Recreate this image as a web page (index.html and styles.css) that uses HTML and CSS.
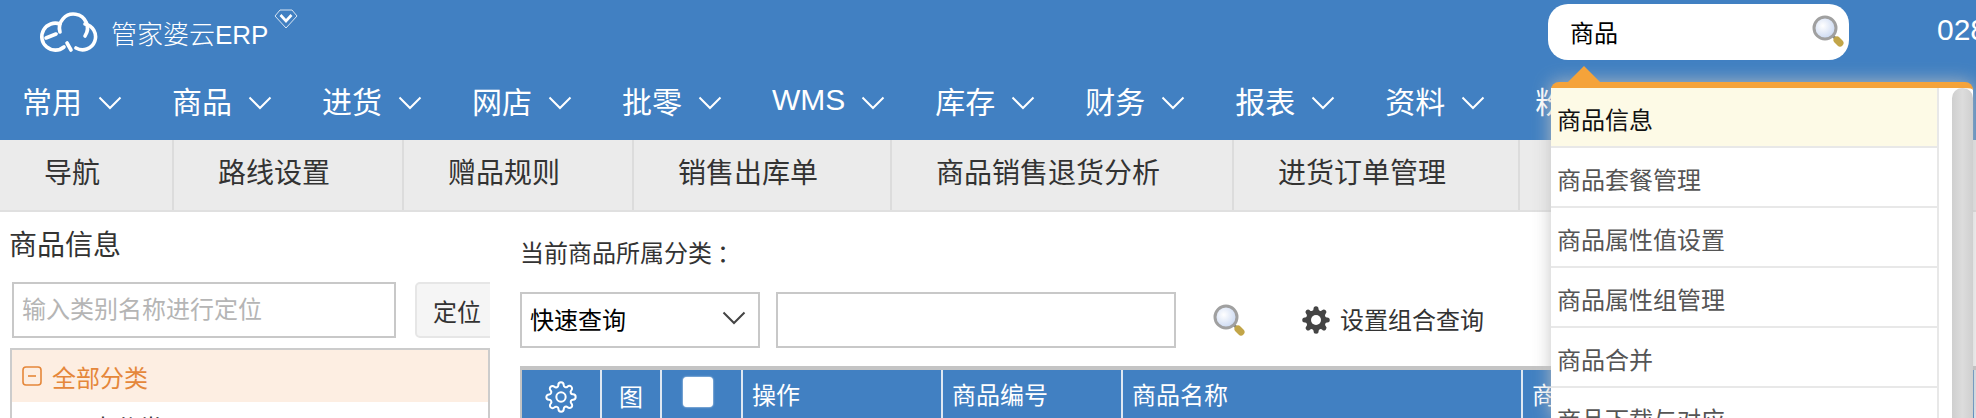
FILE: index.html
```html
<!DOCTYPE html>
<html lang="zh-CN">
<head>
  <meta charset="UTF-8">
  <title>管家婆云ERP</title>
  <link rel="stylesheet" href="styles.css">
</head>
<body>
  <svg class="defs" width="0" height="0">
    <defs>
      <radialGradient id="lens" cx="40%" cy="40%" r="70%">
        <stop offset="0" stop-color="#ffffff"/>
        <stop offset="1" stop-color="#c3d3f0"/>
      </radialGradient>
      <symbol id="magnifier" viewBox="0 0 32 32">
        <line x1="21" y1="21" x2="24" y2="24" stroke="#8a8a7a" stroke-width="3"/>
        <line x1="25" y1="25" x2="28" y2="28" stroke="#c2a548" stroke-width="7" stroke-linecap="round"/>
        <circle cx="13" cy="13" r="11" fill="url(#lens)" stroke="#a0a0a0" stroke-width="3"/>
      </symbol>
      <symbol id="gear" viewBox="0 0 24 24">
        <path d="M19.4 15a1.65 1.65 0 0 0 .33 1.82l.06.06a2 2 0 0 1 0 2.83 2 2 0 0 1-2.83 0l-.06-.06a1.65 1.65 0 0 0-1.82-.33 1.65 1.65 0 0 0-1 1.51V21a2 2 0 0 1-2 2 2 2 0 0 1-2-2v-.09A1.65 1.65 0 0 0 9 19.4a1.65 1.65 0 0 0-1.82.33l-.06.06a2 2 0 0 1-2.83 0 2 2 0 0 1 0-2.83l.06-.06a1.65 1.65 0 0 0 .33-1.82 1.65 1.65 0 0 0-1.51-1H3a2 2 0 0 1-2-2 2 2 0 0 1 2-2h.09A1.65 1.65 0 0 0 4.6 9a1.65 1.65 0 0 0-.33-1.82l-.06-.06a2 2 0 0 1 0-2.83 2 2 0 0 1 2.83 0l.06.06a1.65 1.65 0 0 0 1.82.33H9a1.65 1.65 0 0 0 1-1.51V3a2 2 0 0 1 2-2 2 2 0 0 1 2 2v.09a1.65 1.65 0 0 0 1 1.51 1.65 1.65 0 0 0 1.82-.33l.06-.06a2 2 0 0 1 2.83 0 2 2 0 0 1 0 2.83l-.06.06a1.65 1.65 0 0 0-.33 1.82V9a1.65 1.65 0 0 0 1.51 1H21a2 2 0 0 1 2 2 2 2 0 0 1-2 2h-.09a1.65 1.65 0 0 0-1.51 1z"/>
      </symbol>
      <symbol id="chevron" viewBox="0 0 24 14">
        <polyline points="1.5,1.5 12,12 22.5,1.5" fill="none" stroke="currentColor" stroke-width="2"/>
      </symbol>
    </defs>
  </svg>

  <header class="header">
    <div class="topbar">
      <svg class="logo" viewBox="0 0 66 43" fill="none" stroke="#fff" stroke-width="3.6" stroke-linecap="round">
        <path d="M22 14A13.5 13.5 0 1 0 26 37"/>
        <path d="M8 28L18 24"/>
        <path d="M22 22A14 14 0 1 1 47 26"/>
        <path d="M47 14A13 13 0 1 1 38 38"/>
        <path d="M29 33L33 40"/>
      </svg>
      <span class="logo-text">管家婆云ERP</span>
      <svg class="diamond" viewBox="0 0 24 20" fill="none" stroke="#fff">
        <polygon points="6,1 18,1 23,7 12,19 1,7" stroke-width=".8"/>
        <polyline points="6.5,6 12,12 17.5,6" stroke-width="2.6"/>
      </svg>
      <div class="global-search">
        <span>商品</span>
        <svg class="magnifier"><use href="#magnifier"/></svg>
      </div>
      <span class="phone">028-</span>
    </div>
    <nav class="nav">
      <a class="nav-item">常用<svg class="chevron"><use href="#chevron"/></svg></a>
      <a class="nav-item">商品<svg class="chevron"><use href="#chevron"/></svg></a>
      <a class="nav-item">进货<svg class="chevron"><use href="#chevron"/></svg></a>
      <a class="nav-item">网店<svg class="chevron"><use href="#chevron"/></svg></a>
      <a class="nav-item">批零<svg class="chevron"><use href="#chevron"/></svg></a>
      <a class="nav-item">WMS<svg class="chevron"><use href="#chevron"/></svg></a>
      <a class="nav-item">库存<svg class="chevron"><use href="#chevron"/></svg></a>
      <a class="nav-item">财务<svg class="chevron"><use href="#chevron"/></svg></a>
      <a class="nav-item">报表<svg class="chevron"><use href="#chevron"/></svg></a>
      <a class="nav-item">资料<svg class="chevron"><use href="#chevron"/></svg></a>
      <a class="nav-item">粉丝<svg class="chevron"><use href="#chevron"/></svg></a>
    </nav>
  </header>

  <div class="tabs">
    <a class="tab">导航</a>
    <a class="tab">路线设置</a>
    <a class="tab">赠品规则</a>
    <a class="tab">销售出库单</a>
    <a class="tab">商品销售退货分析</a>
    <a class="tab">进货订单管理</a>
  </div>

  <div class="content">
    <aside class="sidebar">
      <h3 class="side-title">商品信息</h3>
      <div class="locate">
        <input class="field locate-input" type="text" placeholder="输入类别名称进行定位">
        <button class="locate-btn">定位</button>
      </div>
      <div class="tree">
        <div class="tree-root">
          <svg class="tree-toggle" viewBox="0 0 20 20" fill="none" stroke="#e5873a" stroke-width="1.6">
            <rect x="1" y="1" width="18" height="18" rx="3"/>
            <line x1="6" y1="10" x2="14" y2="10"/>
          </svg>
          全部分类
        </div>
        <div class="tree-child">未分类</div>
      </div>
    </aside>

    <main class="main">
      <div class="crumb">当前商品所属分类<span class="colon">：</span></div>
      <div class="toolbar">
        <div class="field select"><span class="select-text">快速查询</span><svg class="chevron select-arrow"><use href="#chevron"/></svg></div>
        <input class="field query-input" type="text">
        <svg class="magnifier query-icon"><use href="#magnifier"/></svg>
        <a class="combo">
          <svg class="combo-gear" viewBox="0 0 24 24"><use href="#gear"/><circle cx="12" cy="12" r="4" fill="#fff"/></svg>
          <span class="combo-text">设置组合查询</span>
        </a>
      </div>
      <table class="grid">
        <tr>
          <th class="col-gear">
            <svg class="th-gear" viewBox="0 0 24 24"><use href="#gear"/><circle cx="12" cy="12" r="3.5"/></svg>
          </th>
          <th class="col-pic">图</th>
          <th class="col-check"><span class="check"></span></th>
          <th class="col-op">操作</th>
          <th class="col-code">商品编号</th>
          <th class="col-name">商品名称</th>
          <th>商品规格</th>
        </tr>
      </table>
    </main>
  </div>

  <div class="suggest">
    <span class="suggest-arrow"></span>
    <div class="suggest-body">
      <ul class="suggest-list">
        <li class="active">商品信息</li>
        <li>商品套餐管理</li>
        <li>商品属性值设置</li>
        <li>商品属性组管理</li>
        <li>商品合并</li>
        <li>商品下载与对应</li>
      </ul>
      <div class="suggest-track"><div class="suggest-thumb"></div></div>
    </div>
  </div>
</body>
</html>
```

FILE: styles.css
```css
* {
  box-sizing: border-box;
}
html, body {
  height: 418px;
  overflow: hidden;
}
body {
  position: relative;
  margin: 0;
  width: 1976px;
  background: #ffffff;
  color: #333333;
  font-family: "Liberation Sans", "Noto Sans CJK SC", sans-serif;
  font-size: 24px;
}
.defs {
  position: absolute;
}

/* header */
.header {
  height: 140px;
  background: #4180c2;
  color: #ffffff;
}
.topbar {
  display: flex;
  height: 60px;
  padding-left: 38px;
}
.logo {
  flex-shrink: 0;
  width: 66px;
  height: 43px;
  margin-top: 10px;
}
.logo-text {
  flex-shrink: 0;
  width: 163px;
  margin: 20px 0 0 7px;
  font-size: 26px;
  line-height: 30px;
  font-weight: 300;
}
.diamond {
  flex-shrink: 0;
  width: 24px;
  height: 20px;
  margin-top: 9px;
}
.global-search {
  flex-shrink: 0;
  display: flex;
  align-items: center;
  justify-content: space-between;
  width: 301px;
  height: 56px;
  margin: 4px 0 0 1250px;
  padding: 0 5px 2px 22px;
  background: #ffffff;
  border-radius: 20px;
  color: #000000;
}
.magnifier {
  width: 32px;
  height: 32px;
}
.phone {
  flex-shrink: 0;
  margin: 13px 0 0 88px;
  font-size: 30px;
  line-height: 34px;
}
.nav {
  display: flex;
  gap: 50px;
  height: 80px;
  padding: 0 0 0 22px;
  align-items: center;
  font-size: 30px;
  white-space: nowrap;
}
.nav-item {
  display: flex;
  align-items: center;
  gap: 16px;
}
.chevron {
  width: 24px;
  height: 14px;
  margin-top: 6px;
}

/* tabs */
.tabs {
  display: flex;
  height: 72px;
  background: #ebebeb;
  border-bottom: 2px solid #e0e0e0;
  font-size: 28px;
  line-height: 68px;
}
.tab {
  padding: 0 72px 0 44px;
  border-right: 2px solid #dcdcdc;
  white-space: nowrap;
}

/* left tree */
.content {
  display: flex;
}
.sidebar {
  flex-shrink: 0;
  width: 480px;
  margin-left: 10px;
  overflow: hidden;
}
.side-title {
  margin: 20px 0 0 -1px;
  font-size: 28px;
  font-weight: normal;
  line-height: 28px;
}
.field {
  height: 56px;
  border: 2px solid #c8c8c8;
  background: #ffffff;
  font: inherit;
  color: #000000;
}
.locate {
  display: flex;
  gap: 19px;
  margin: 22px 0 0 2px;
}
.locate-input {
  flex-shrink: 0;
  width: 384px;
  padding: 0 8px;
}
.locate-input::placeholder {
  color: #b5b5b5;
}
.locate-btn {
  flex-shrink: 0;
  width: 90px;
  height: 56px;
  padding: 0 0 0 16px;
  background: #f5f5f5;
  border: 2px solid #e6e6e6;
  border-radius: 5px;
  font: inherit;
  color: #333333;
  text-align: left;
}
.tree {
  height: 90px;
  margin-top: 10px;
  border: 2px solid #cccccc;
}
.tree-root {
  display: flex;
  align-items: center;
  gap: 10px;
  height: 52px;
  padding-left: 10px;
  background: #fdeee2;
  color: #e5873a;
}
.tree-toggle {
  width: 20px;
  height: 20px;
}
.tree-child {
  padding: 11px 0 0 79px;
  line-height: 32px;
}

/* right side */
.main {
  flex-grow: 1;
  min-width: 0;
  margin-left: 30px;
}
.crumb {
  margin-top: 26px;
  line-height: 28px;
  font-size: 24px;
}
.colon {
  margin-left: 5px;
  font-family: "Noto Sans CJK TC", sans-serif;
}
.toolbar {
  display: flex;
  align-items: center;
  margin-top: 24px;
}
.select {
  display: flex;
  align-items: center;
  justify-content: space-between;
  flex-shrink: 0;
  width: 240px;
  padding: 0 12px 0 8px;
}
.select-text {
  margin-bottom: 4px;
}
.select-arrow {
  color: #444444;
  margin: 0 0 4px;
}
.query-input {
  flex-shrink: 0;
  width: 400px;
  margin-left: 16px;
}
.query-icon {
  margin-left: 37px;
}
.combo {
  display: flex;
  align-items: center;
  gap: 9px;
  margin-left: 56px;
}
.combo-gear {
  width: 30px;
  height: 30px;
  fill: #444444;
}
.combo-text {
  margin-bottom: 4px;
}
.grid {
  width: 1456px;
  margin-top: 18px;
  border-collapse: separate;
  border-spacing: 0;
  border-top: 4px solid #c4c4c4;
  border-left: 2px solid #c4c4c4;
  table-layout: fixed;
  color: #ffffff;
}
.grid th {
  height: 50px;
  padding: 0 0 4px 9px;
  background: #4180c2;
  border-right: 2px solid #dfe8f2;
  font-weight: normal;
  text-align: left;
  white-space: nowrap;
  overflow: hidden;
}
.grid .col-gear, .grid .col-pic, .grid .col-check {
  padding: 0;
  text-align: center;
}
.col-gear {
  width: 80px;
}
.col-pic {
  width: 60px;
}
.col-check {
  width: 81px;
}
.grid .col-check {
  padding: 0 8px 6px 0;
}
.col-op {
  width: 200px;
}
.col-code {
  width: 180px;
}
.col-name {
  width: 400px;
}
.th-gear {
  width: 32px;
  height: 32px;
  margin-top: 4px;
  fill: none;
  stroke: #ffffff;
  stroke-width: 1.5;
  vertical-align: middle;
}
.check {
  display: inline-block;
  width: 30px;
  height: 30px;
  background: #ffffff;
  border-radius: 4px;
  box-shadow: 0 0 2px #ffffff;
  vertical-align: middle;
}

/* search suggestions, over the page */
.suggest {
  position: absolute;
  top: 82px;
  left: 1551px;
  width: 422px;
  height: 336px;
  overflow: visible;
  background: #ffffff;
  border-top: 6px solid #f5a33a;
  border-radius: 8px 8px 0 0;
  box-shadow: 0 0 18px rgba(190, 190, 190, 0.9);
}
.suggest-arrow {
  position: absolute;
  top: -22px;
  left: 17px;
  width: 0;
  height: 0;
  border-left: 16px solid transparent;
  border-right: 16px solid transparent;
  border-bottom: 16px solid #f5a33a;
}
.suggest-body {
  display: flex;
}
.suggest-list {
  flex-shrink: 0;
  width: 388px;
  margin: 0;
  padding: 0;
  list-style: none;
  border-right: 2px solid #e8e8e8;
  color: #555555;
}
.suggest-list li {
  height: 60px;
  padding: 17px 0 0 6px;
  border-bottom: 2px solid #e8e8e8;
  line-height: 32px;
}
.suggest-list .active {
  background: #fdfae6;
  color: #111111;
}
.suggest-track {
  flex-grow: 1;
  padding-left: 13px;
}
.suggest-thumb {
  width: 21px;
  height: 340px;
  background: linear-gradient(to right, #cfcfcf, #dcdcdc 50%, #cfcfcf);
  border-radius: 10px 10px 0 0;
}
```
